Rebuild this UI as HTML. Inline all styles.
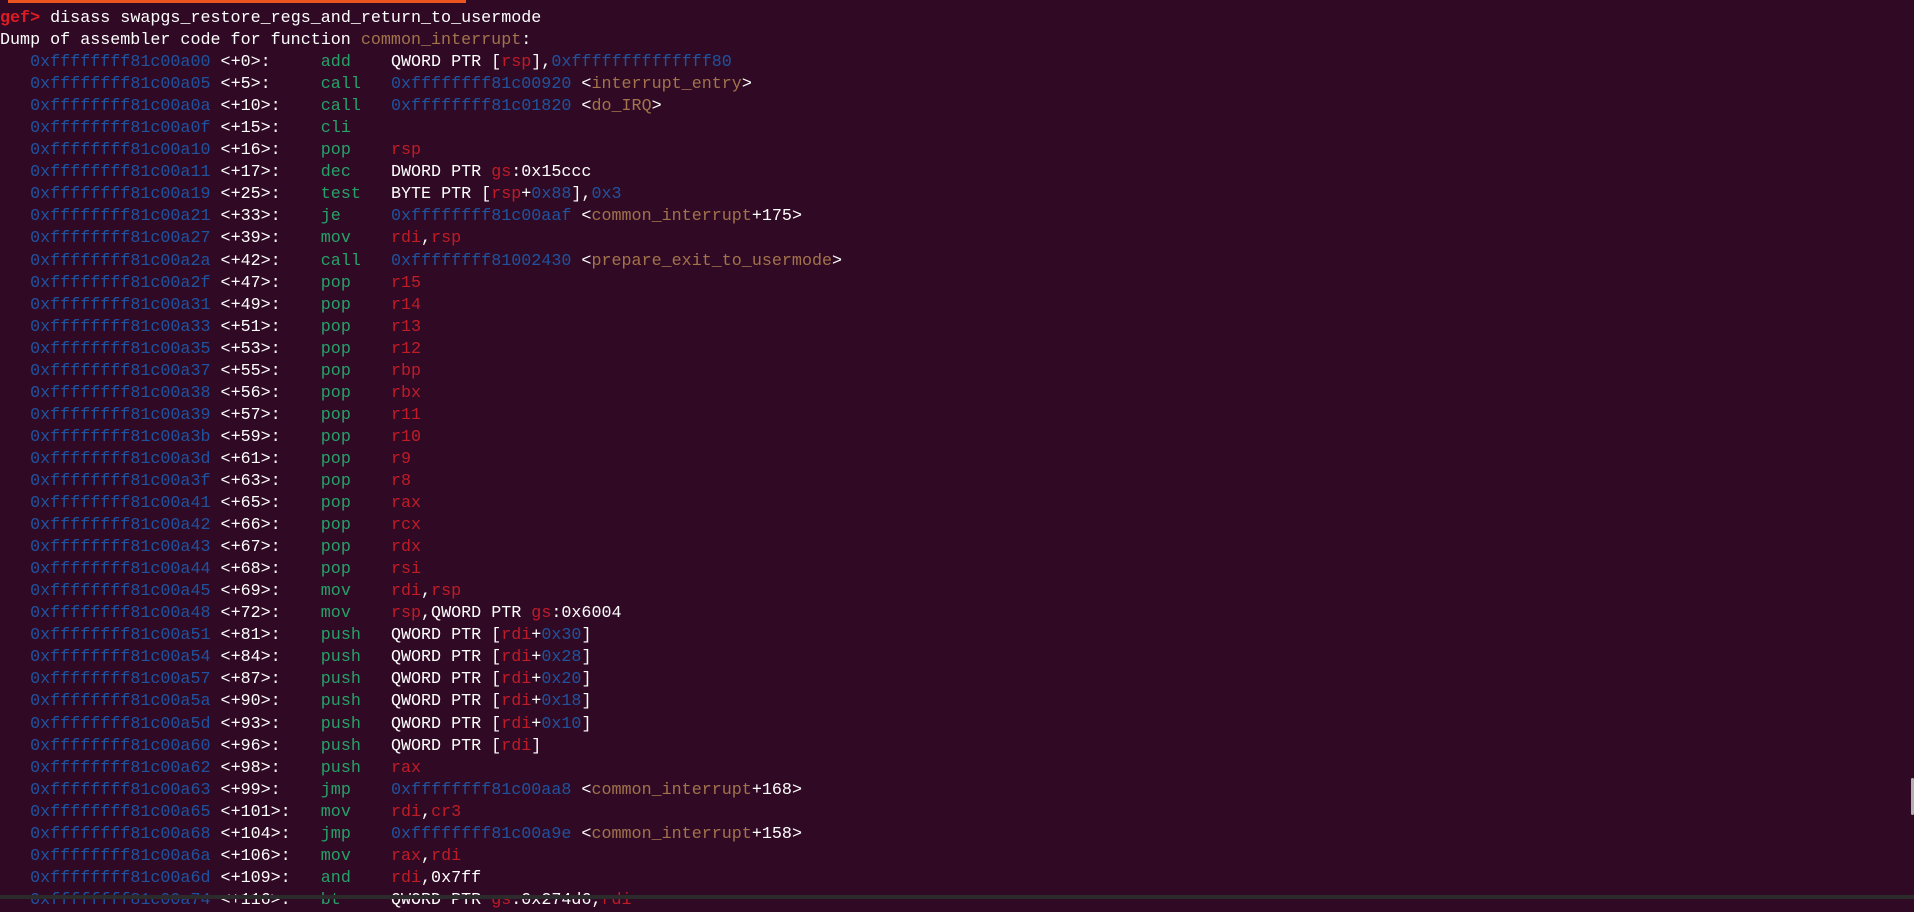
<!DOCTYPE html>
<html><head><meta charset="utf-8"><style>
html,body{margin:0;padding:0;background:#300a24;width:1914px;height:899px;overflow:hidden;}
pre{margin:0;position:absolute;left:0;top:8px;font-family:"Liberation Mono",monospace;font-size:16.72px;line-height:22.05px;color:#ffffff;white-space:pre;}
.a{color:#1f53a0}.m{color:#26a269}.r{color:#c01c28}.s{color:#a2734c}.g{color:#e01b24;font-weight:bold}
.bar{position:absolute;left:8px;top:0;width:458px;height:3px;background:#e95420}
.bot{position:absolute;left:0;top:895px;width:1914px;height:4px;background:#2b2b2b}
.sb{position:absolute;left:1911px;top:778px;width:3px;height:37px;background:#b0b0b0;border-radius:2px}
</style></head><body>
<div class="bar"></div>
<pre><span class="g">gef&gt;</span> disass swapgs_restore_regs_and_return_to_usermode
Dump of assembler code for function <span class="s">common_interrupt</span>:
   <span class="a">0xffffffff81c00a00</span> &lt;+0&gt;:	<span class="m">add</span>    QWORD PTR [<span class="r">rsp</span>],<span class="a">0xffffffffffffff80</span>
   <span class="a">0xffffffff81c00a05</span> &lt;+5&gt;:	<span class="m">call</span>   <span class="a">0xffffffff81c00920</span> &lt;<span class="s">interrupt_entry</span>&gt;
   <span class="a">0xffffffff81c00a0a</span> &lt;+10&gt;:	<span class="m">call</span>   <span class="a">0xffffffff81c01820</span> &lt;<span class="s">do_IRQ</span>&gt;
   <span class="a">0xffffffff81c00a0f</span> &lt;+15&gt;:	<span class="m">cli</span>
   <span class="a">0xffffffff81c00a10</span> &lt;+16&gt;:	<span class="m">pop</span>    <span class="r">rsp</span>
   <span class="a">0xffffffff81c00a11</span> &lt;+17&gt;:	<span class="m">dec</span>    DWORD PTR <span class="r">gs</span>:0x15ccc
   <span class="a">0xffffffff81c00a19</span> &lt;+25&gt;:	<span class="m">test</span>   BYTE PTR [<span class="r">rsp</span>+<span class="a">0x88</span>],<span class="a">0x3</span>
   <span class="a">0xffffffff81c00a21</span> &lt;+33&gt;:	<span class="m">je</span>     <span class="a">0xffffffff81c00aaf</span> &lt;<span class="s">common_interrupt</span>+175&gt;
   <span class="a">0xffffffff81c00a27</span> &lt;+39&gt;:	<span class="m">mov</span>    <span class="r">rdi</span>,<span class="r">rsp</span>
   <span class="a">0xffffffff81c00a2a</span> &lt;+42&gt;:	<span class="m">call</span>   <span class="a">0xffffffff81002430</span> &lt;<span class="s">prepare_exit_to_usermode</span>&gt;
   <span class="a">0xffffffff81c00a2f</span> &lt;+47&gt;:	<span class="m">pop</span>    <span class="r">r15</span>
   <span class="a">0xffffffff81c00a31</span> &lt;+49&gt;:	<span class="m">pop</span>    <span class="r">r14</span>
   <span class="a">0xffffffff81c00a33</span> &lt;+51&gt;:	<span class="m">pop</span>    <span class="r">r13</span>
   <span class="a">0xffffffff81c00a35</span> &lt;+53&gt;:	<span class="m">pop</span>    <span class="r">r12</span>
   <span class="a">0xffffffff81c00a37</span> &lt;+55&gt;:	<span class="m">pop</span>    <span class="r">rbp</span>
   <span class="a">0xffffffff81c00a38</span> &lt;+56&gt;:	<span class="m">pop</span>    <span class="r">rbx</span>
   <span class="a">0xffffffff81c00a39</span> &lt;+57&gt;:	<span class="m">pop</span>    <span class="r">r11</span>
   <span class="a">0xffffffff81c00a3b</span> &lt;+59&gt;:	<span class="m">pop</span>    <span class="r">r10</span>
   <span class="a">0xffffffff81c00a3d</span> &lt;+61&gt;:	<span class="m">pop</span>    <span class="r">r9</span>
   <span class="a">0xffffffff81c00a3f</span> &lt;+63&gt;:	<span class="m">pop</span>    <span class="r">r8</span>
   <span class="a">0xffffffff81c00a41</span> &lt;+65&gt;:	<span class="m">pop</span>    <span class="r">rax</span>
   <span class="a">0xffffffff81c00a42</span> &lt;+66&gt;:	<span class="m">pop</span>    <span class="r">rcx</span>
   <span class="a">0xffffffff81c00a43</span> &lt;+67&gt;:	<span class="m">pop</span>    <span class="r">rdx</span>
   <span class="a">0xffffffff81c00a44</span> &lt;+68&gt;:	<span class="m">pop</span>    <span class="r">rsi</span>
   <span class="a">0xffffffff81c00a45</span> &lt;+69&gt;:	<span class="m">mov</span>    <span class="r">rdi</span>,<span class="r">rsp</span>
   <span class="a">0xffffffff81c00a48</span> &lt;+72&gt;:	<span class="m">mov</span>    <span class="r">rsp</span>,QWORD PTR <span class="r">gs</span>:0x6004
   <span class="a">0xffffffff81c00a51</span> &lt;+81&gt;:	<span class="m">push</span>   QWORD PTR [<span class="r">rdi</span>+<span class="a">0x30</span>]
   <span class="a">0xffffffff81c00a54</span> &lt;+84&gt;:	<span class="m">push</span>   QWORD PTR [<span class="r">rdi</span>+<span class="a">0x28</span>]
   <span class="a">0xffffffff81c00a57</span> &lt;+87&gt;:	<span class="m">push</span>   QWORD PTR [<span class="r">rdi</span>+<span class="a">0x20</span>]
   <span class="a">0xffffffff81c00a5a</span> &lt;+90&gt;:	<span class="m">push</span>   QWORD PTR [<span class="r">rdi</span>+<span class="a">0x18</span>]
   <span class="a">0xffffffff81c00a5d</span> &lt;+93&gt;:	<span class="m">push</span>   QWORD PTR [<span class="r">rdi</span>+<span class="a">0x10</span>]
   <span class="a">0xffffffff81c00a60</span> &lt;+96&gt;:	<span class="m">push</span>   QWORD PTR [<span class="r">rdi</span>]
   <span class="a">0xffffffff81c00a62</span> &lt;+98&gt;:	<span class="m">push</span>   <span class="r">rax</span>
   <span class="a">0xffffffff81c00a63</span> &lt;+99&gt;:	<span class="m">jmp</span>    <span class="a">0xffffffff81c00aa8</span> &lt;<span class="s">common_interrupt</span>+168&gt;
   <span class="a">0xffffffff81c00a65</span> &lt;+101&gt;:	<span class="m">mov</span>    <span class="r">rdi</span>,<span class="r">cr3</span>
   <span class="a">0xffffffff81c00a68</span> &lt;+104&gt;:	<span class="m">jmp</span>    <span class="a">0xffffffff81c00a9e</span> &lt;<span class="s">common_interrupt</span>+158&gt;
   <span class="a">0xffffffff81c00a6a</span> &lt;+106&gt;:	<span class="m">mov</span>    <span class="r">rax</span>,<span class="r">rdi</span>
   <span class="a">0xffffffff81c00a6d</span> &lt;+109&gt;:	<span class="m">and</span>    <span class="r">rdi</span>,0x7ff
   <span class="a">0xffffffff81c00a74</span> &lt;+116&gt;:	<span class="m">bt</span>     QWORD PTR <span class="r">gs</span>:0x274d6,<span class="r">rdi</span>
</pre>
<div class="bot"></div>
<div class="sb"></div>
</body></html>
